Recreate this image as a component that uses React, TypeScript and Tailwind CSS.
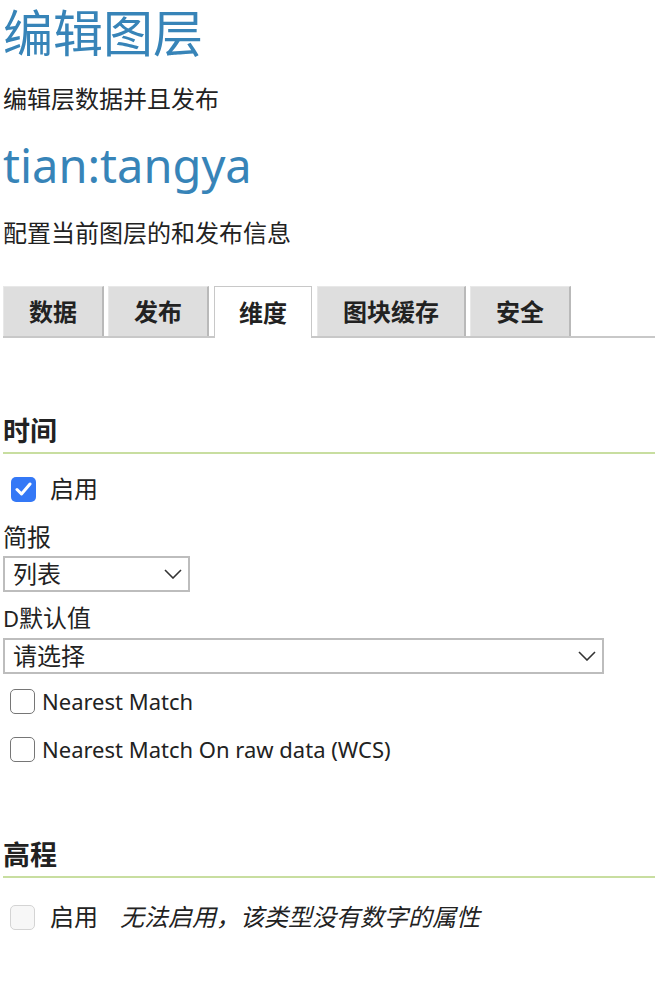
import React from "react";

const tabs = ["数据", "发布", "维度", "图块缓存", "安全"];

const Chevron = () => (
  <svg width="18" height="10" viewBox="0 0 18 10" fill="none" className="text-[#333]">
    <path d="M1 1l8 8 8-8" stroke="currentColor" strokeWidth="1.6" />
  </svg>
);

const Box = ({ checked, disabled }: { checked?: boolean; disabled?: boolean }) => {
  if (checked) {
    return (
      <span className="flex h-[25px] w-[25px] shrink-0 items-center justify-center rounded-[5px] bg-[#3478f6]">
        <svg width="17" height="14" viewBox="0 0 17 14" fill="none">
          <path d="M2 7.5l4.5 4.5L15 2" stroke="white" strokeWidth="3" strokeLinecap="round" strokeLinejoin="round" />
        </svg>
      </span>
    );
  }
  return (
    <span
      className={
        disabled
          ? "block h-[25px] w-[25px] shrink-0 rounded-[5px] border border-[#d4d4d4] bg-[#f7f7f7]"
          : "block h-[25px] w-[25px] shrink-0 rounded-[5px] border border-[#767676] bg-white"
      }
    />
  );
};

const Select = ({ value, width }: { value: string; width: string }) => (
  <div className={`flex h-[36px] items-center justify-between border-2 border-[#bdbdbd] bg-white pl-[8px] pr-[6px] text-[24px] text-[#222] ${width}`}>
    <span>{value}</span>
    <Chevron />
  </div>
);

export default function App() {
  return (
    <div
      className="min-h-[994px] bg-white px-[3px] pt-[3px] text-[#222]"
      style={{ fontFamily: '"Noto Sans", "Noto Sans CJK SC", sans-serif' }}
    >
      <h1 className="text-[50px] leading-[60px] text-[#3784b8]">编辑图层</h1>
      <p className="mt-[20px] text-[24px] leading-[32px]">编辑层数据并且发布</p>
      <h2 className="mt-[22px] text-[47px] leading-[56px] text-[#3784b8]">tian:tangya</h2>
      <p className="mt-[24px] text-[24px] leading-[32px]">配置当前图层的和发布信息</p>

      {/* tabs */}
      <div className="mt-[37px] flex items-start gap-[4px] border-b-2 border-[#c8c8c8]">
        {tabs.map((t, i) =>
          i === 2 ? (
            <div
              key={t}
              className="-mb-[2px] mx-px flex h-[52px] items-center border border-b-0 border-[#c8c8c8] bg-white px-[24px] text-[24px] font-bold"
            >
              {t}
            </div>
          ) : (
            <div
              key={t}
              className="flex h-[50px] items-center border-r-2 border-b-0 border-[#b9b9b9] border-l border-l-[#e8e8e8] border-t border-t-[#e8e8e8] bg-[#dedede] px-[25px] text-[24px] font-bold"
            >
              {t}
            </div>
          )
        )}
      </div>

      {/* 时间 */}
      <h3 className="mt-[75px] border-b-2 border-[#c8dea0] pb-[3px] text-[27px] font-bold leading-[36px]">时间</h3>
      <label className="mt-[19px] flex items-center gap-[14px] pl-[8px] text-[24px] leading-[32px]">
        <Box checked />
        <span>启用</span>
      </label>
      <div className="mt-[16px] text-[24px] leading-[32px]">简报</div>
      <div className="mt-[3px]">
        <Select value="列表" width="w-[187px]" />
      </div>
      <div className="mt-[10px] text-[24px] leading-[32px]">
        <span className="text-[22px]">D</span>默认值
      </div>
      <div className="mt-[4px]">
        <Select value="请选择" width="w-[601px]" />
      </div>
      <label className="mt-[11px] flex items-center gap-[7px] pl-[7px] text-[22px] leading-[32px]">
        <Box />
        <span>Nearest Match</span>
      </label>
      <label className="mt-[16px] flex items-center gap-[7px] pl-[7px] text-[22px] leading-[32px]">
        <Box />
        <span>Nearest Match On raw data (WCS)</span>
      </label>

      {/* 高程 */}
      <h3 className="mt-[72px] border-b-2 border-[#c8dea0] pb-[3px] text-[27px] font-bold leading-[36px]">高程</h3>
      <div className="mt-[23px] flex items-center pl-[7px] text-[24px] leading-[32px]">
        <Box disabled />
        <span className="ml-[15px]">启用</span>
        <span className="ml-[22px] italic">无法启用，该类型没有数字的属性</span>
      </div>
    </div>
  );
}
